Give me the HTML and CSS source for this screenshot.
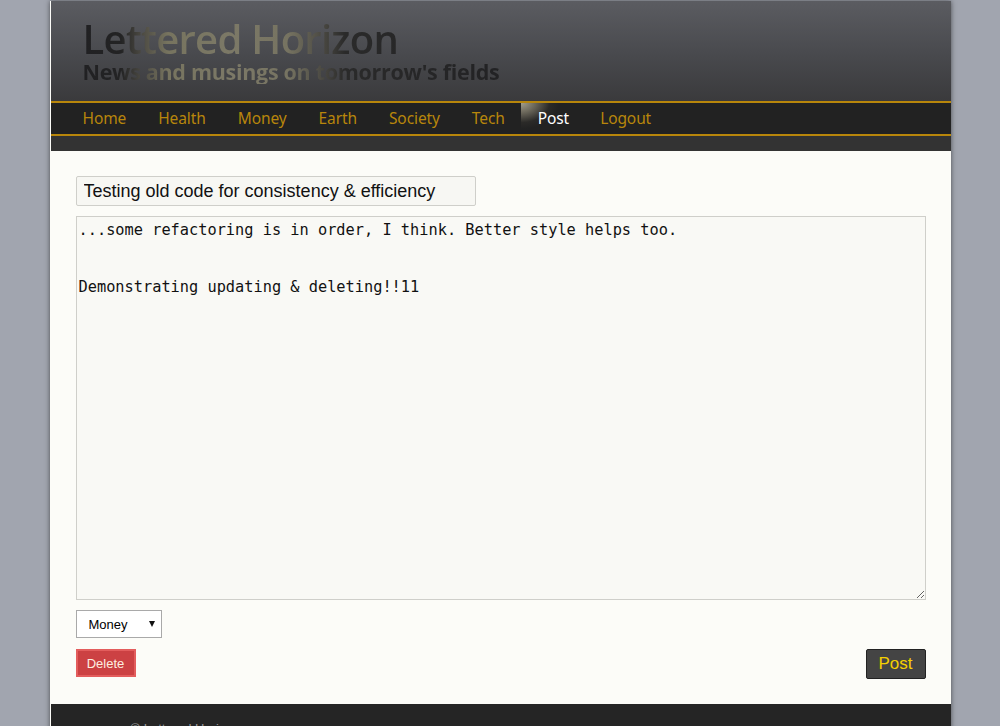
FILE: index.html
```html
<!DOCTYPE html>
<html lang="en">
<head>
<meta charset="utf-8">
<title>Lettered Horizon</title>
<link rel="stylesheet" href="styles.css">
</head>
<body>
<div class="page">
  <header class="masthead">
    <h1 class="site-title">Lettered Horizon</h1>
    <p class="site-tagline">News and musings on tomorrow's fields</p>
  </header>
  <nav class="mainnav">
    <a href="#">Home</a>
    <a href="#">Health</a>
    <a href="#">Money</a>
    <a href="#">Earth</a>
    <a href="#">Society</a>
    <a href="#">Tech</a>
    <a href="#" class="active">Post</a>
    <a href="#">Logout</a>
  </nav>
  <div class="navstrip"></div>
  <main class="editor">
    <input class="title-input" type="text" value="Testing old code for consistency &amp; efficiency">
    <textarea class="body-input">...some refactoring is in order, I think. Better style helps too.


Demonstrating updating &amp; deleting!!11</textarea>
    <div class="select-wrap">
      <select class="category">
        <option>Home</option>
        <option>Health</option>
        <option selected>Money</option>
        <option>Earth</option>
        <option>Society</option>
        <option>Tech</option>
      </select>
    </div>
    <div class="actions">
      <button class="btn-delete" type="button">Delete</button>
      <button class="btn-post" type="button">Post</button>
    </div>
  </main>
  <footer class="footer">
    <p>&copy; Lettered Horizon</p>
  </footer>
</div>
</body>
</html>
```
FILE: styles.css
```css
html, body {
  margin: 0;
  padding: 0;
}
body {
  background: #a1a5af;
  font-family: "Liberation Sans", Arial, sans-serif;
  overflow: hidden;
}
.page {
  width: 900px;
  margin: 1px auto 0;
  padding-left: 1px;
  box-shadow: 0 0 5px rgba(0, 0, 0, 0.55);
  background: #fcfcf8;
}
.masthead {
  height: 100px;
  box-sizing: border-box;
  padding: 16px 0 0 32px;
  background: linear-gradient(to bottom, #5b5c61 0%, #48494d 55%, #3a3a3c 100%);
}
.site-title,
.site-tagline {
  margin: 0;
  font-family: "Open Sans", "Noto Sans", sans-serif;
  display: block;
  width: max-content;
  color: transparent;
  -webkit-background-clip: text;
  background-clip: text;
  background-image: linear-gradient(90deg, #212123 0px, #232324 38px, #4e4c44 60px, #77745f 85px, #7c7967 150px, #767361 205px, #55534a 232px, #2a2a2a 262px, #222224 420px);
}
.site-title {
  font-size: 40px;
  font-weight: 600;
  line-height: 43px;
  letter-spacing: -0.7px;
}
.site-tagline {
  font-size: 21.5px;
  font-weight: 700;
  line-height: 24px;
  letter-spacing: -0.3px;
}
.mainnav {
  display: flex;
  align-items: stretch;
  height: 31px;
  padding-left: 16px;
  background: #222222;
  border-top: 2px solid #b8860b;
  border-bottom: 2px solid #b8860b;
}
.mainnav a {
  display: flex;
  align-items: center;
  padding: 0 16px 2px;
  font-family: "Noto Sans", "Open Sans", sans-serif;
  font-size: 15.5px;
  color: #b8860b;
  text-decoration: none;
  letter-spacing: -0.1px;
}
.mainnav a.active {
  color: #ffffff;
  padding-left: 17px;
  padding-right: 15px;
  background: radial-gradient(ellipse 38px 26px at 0 0, #a39e8b 0%, #6e6a5d 35%, #2b2a28 75%, #222222 100%);
}
.navstrip {
  height: 15px;
  background: #333333;
}
.editor {
  display: flex;
  flex-direction: column;
  align-items: flex-start;
  padding: 25px 25px 25px 25px;
  background: #fcfcf8;
}
.title-input {
  box-sizing: border-box;
  width: 400px;
  height: 30px;
  padding: 0 7px;
  border: 1px solid #cfcfca;
  border-radius: 2px;
  background: #f7f7f3;
  font-family: "Liberation Sans", Arial, sans-serif;
  font-size: 18px;
  color: #111;
  outline: none;
}
.body-input {
  box-sizing: border-box;
  width: 850px;
  height: 384px;
  margin-top: 10px;
  padding: 4px 2px 2px;
  border: 1px solid #cfcfca;
  background: #f9f9f5;
  font-family: "DejaVu Sans Mono", "Liberation Mono", monospace;
  font-size: 15.3px;
  line-height: 19px;
  color: #111;
  outline: none;
}
.select-wrap {
  position: relative;
  margin-top: 10px;
}
.select-wrap::after {
  content: "";
  position: absolute;
  right: 7px;
  top: 11px;
  border-left: 3.5px solid transparent;
  border-right: 3.5px solid transparent;
  border-top: 6px solid #111;
  pointer-events: none;
}
.category {
  -webkit-appearance: none;
  appearance: none;
  box-sizing: border-box;
  width: 86px;
  height: 28px;
  padding: 0 0 0 12px;
  border: 1px solid #a9a9a9;
  border-radius: 0;
  background: #ffffff;
  font-family: "Liberation Sans", Arial, sans-serif;
  font-size: 13px;
  color: #000;
}
.actions {
  display: flex;
  justify-content: space-between;
  align-items: flex-start;
  width: 850px;
  margin-top: 11px;
}
.btn-delete {
  box-sizing: border-box;
  width: 60px;
  height: 28px;
  padding: 0;
  border: 2px solid #e35d5d;
  background: #cc4143;
  color: #fdeee0;
  font-family: "Liberation Sans", Arial, sans-serif;
  font-size: 13px;
}
.btn-post {
  box-sizing: border-box;
  width: 60px;
  height: 30px;
  padding: 0;
  border: 1px solid #222;
  border-radius: 2px;
  background: #444444;
  color: #f5d000;
  font-family: "Liberation Sans", Arial, sans-serif;
  font-size: 17px;
}
.footer {
  background: #252525;
  padding: 17px 0 30px 80px;
  color: #999;
  font-size: 13px;
}
.footer p {
  margin: 0;
}
```
